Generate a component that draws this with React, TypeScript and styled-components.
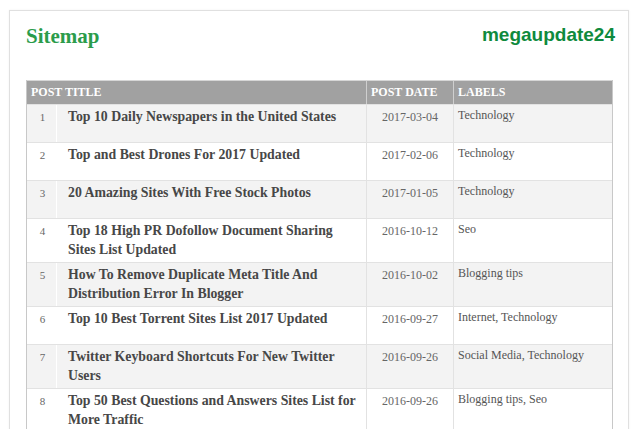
import React from "react";
import styled, { createGlobalStyle } from "styled-components";

const Global = createGlobalStyle`
  html, body { margin: 0; padding: 0; background: #ffffff; }
  body { font-family: "Liberation Serif", "DejaVu Serif", serif; }
`;

const Card = styled.div`
  margin: 10px 0 0 9px;
  width: 620px;
  height: 440px;
  border: 1px solid #e0e0e0;
  box-shadow: 0 0 2px rgba(0, 0, 0, 0.06);
  padding: 0 15px 0 16px;
  box-sizing: border-box;
  overflow: hidden;
`;

const Head = styled.div`
  display: flex;
  justify-content: space-between;
  align-items: flex-start;
  padding-top: 13px;
  height: 69px;
  box-sizing: border-box;
`;

const Title = styled.h1`
  margin: 0;
  font-family: "Liberation Serif", serif;
  font-size: 21px;
  font-weight: bold;
  color: #2b9c4b;
  line-height: 24px;
`;

const Brand = styled.div`
  font-family: "Liberation Sans", Arial, sans-serif;
  font-size: 19px;
  font-weight: bold;
  color: #0f8a3d;
  line-height: 22px;
  margin-right: -2px;
`;

const Table = styled.div`
  width: 587px;
  border-left: 1px solid #c8c8c8;
  border-right: 1px solid #c8c8c8;
  box-sizing: border-box;
`;

const cols = "30px 309px 87px 159px";

const HeaderRow = styled.div`
  display: grid;
  grid-template-columns: ${cols};
  height: 24px;
  background: #a1a1a1;
  border-top: 1px solid #d6d6d6;
  box-sizing: border-box;
`;

const HeaderCell = styled.div<{ $span?: boolean; $sep?: boolean }>`
  grid-column: ${(p) => (p.$span ? "span 2" : "auto")};
  color: #ffffff;
  font-weight: bold;
  font-size: 12px;
  line-height: 23px;
  padding-left: 4px;
  border-left: ${(p) => (p.$sep ? "1px solid #cfcfcf" : "none")};
  white-space: nowrap;
`;

const Row = styled.div<{ $alt: boolean }>`
  display: grid;
  grid-template-columns: ${cols};
  min-height: 38px;
  background: ${(p) => (p.$alt ? "#f3f3f3" : "#ffffff")};
  border-top: 1px solid #e2e2e2;
  box-sizing: border-box;
`;

const NumCell = styled.div`
  font-size: 11px;
  color: #666;
  text-align: center;
  padding: 3px 0 0 2px;
  line-height: 19px;
  border-right: 1px solid #ffffff;
`;

const TitleCell = styled.div`
  font-weight: bold;
  font-size: 13.8px;
  color: #474747;
  line-height: 19px;
  padding: 2px 4px 3px 11px;
  white-space: nowrap;
`;

const Line = styled.div``;

const DateCell = styled.div`
  font-size: 12px;
  color: #666;
  text-align: center;
  line-height: 19px;
  padding-top: 3px;
  border-left: 1px solid #e2e2e2;
`;

const LabelCell = styled.div`
  font-size: 12px;
  color: #555;
  line-height: 19px;
  padding: 1px 0 0 4px;
  border-left: 1px solid #e2e2e2;
  white-space: nowrap;
`;

const posts = [
  { t: ["Top 10 Daily Newspapers in the United States"], d: "2017-03-04", l: "Technology" },
  { t: ["Top and Best Drones For 2017 Updated"], d: "2017-02-06", l: "Technology" },
  { t: ["20 Amazing Sites With Free Stock Photos"], d: "2017-01-05", l: "Technology" },
  { t: ["Top 18 High PR Dofollow Document Sharing", "Sites List Updated"], d: "2016-10-12", l: "Seo" },
  { t: ["How To Remove Duplicate Meta Title And", "Distribution Error In Blogger"], d: "2016-10-02", l: "Blogging tips" },
  { t: ["Top 10 Best Torrent Sites List 2017 Updated"], d: "2016-09-27", l: "Internet, Technology" },
  { t: ["Twitter Keyboard Shortcuts For New Twitter", "Users"], d: "2016-09-26", l: "Social Media, Technology" },
  { t: ["Top 50 Best Questions and Answers Sites List for", "More Traffic"], d: "2016-09-26", l: "Blogging tips, Seo" },
];

export default function App() {
  return (
    <>
      <Global />
      <Card>
        <Head>
          <Title>Sitemap</Title>
          <Brand>megaupdate24</Brand>
        </Head>
        <Table>
          <HeaderRow>
            <HeaderCell $span>POST TITLE</HeaderCell>
            <HeaderCell $sep>POST DATE</HeaderCell>
            <HeaderCell $sep>LABELS</HeaderCell>
          </HeaderRow>
          {posts.map((p, i) => (
            <Row key={i} $alt={i % 2 === 0}>
              <NumCell>{i + 1}</NumCell>
              <TitleCell>
                {p.t.map((line, j) => (
                  <Line key={j}>{line}</Line>
                ))}
              </TitleCell>
              <DateCell>{p.d}</DateCell>
              <LabelCell>{p.l}</LabelCell>
            </Row>
          ))}
        </Table>
      </Card>
    </>
  );
}
